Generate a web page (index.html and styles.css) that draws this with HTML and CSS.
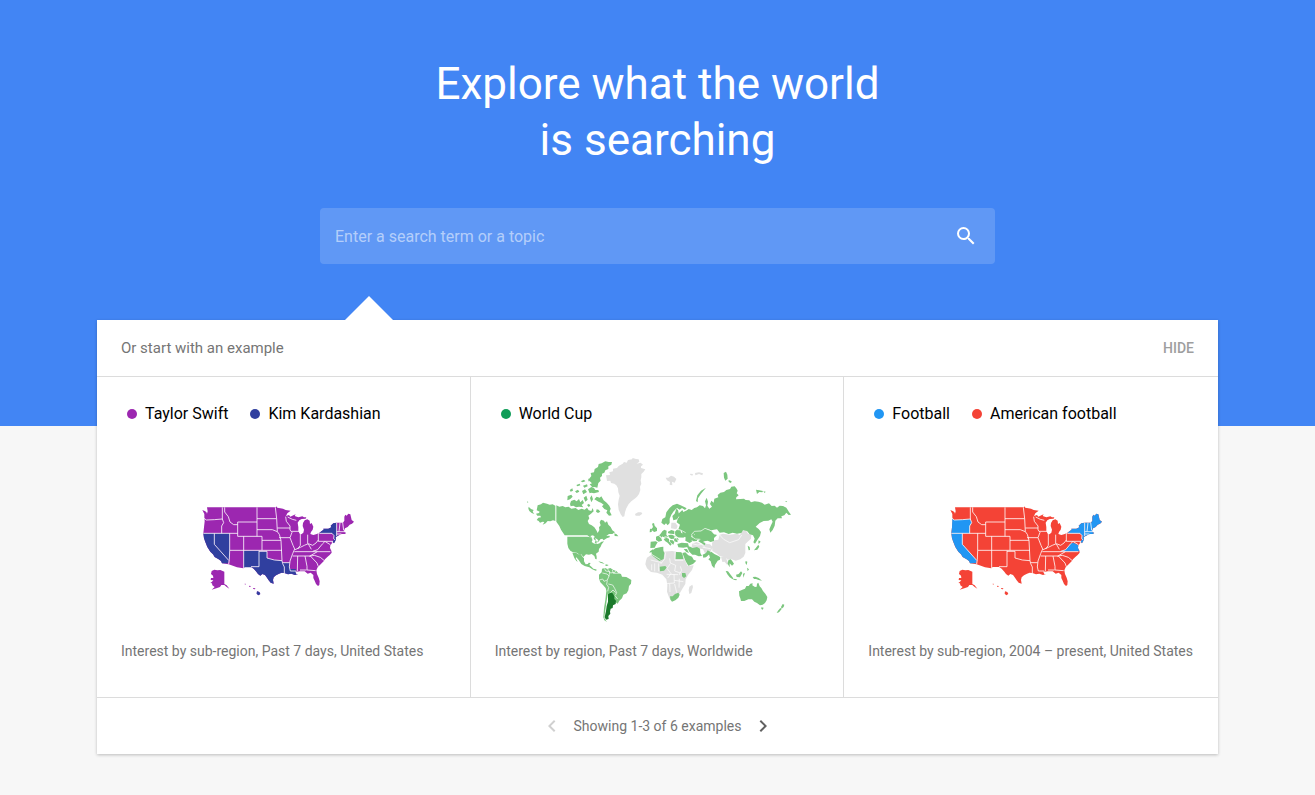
FILE: index.html
```html
<!DOCTYPE html>
<html lang="en">
<head>
  <meta charset="UTF-8" />
  <meta name="viewport" content="width=device-width, initial-scale=1" />
  <title>Explore what the world is searching</title>
  <link rel="stylesheet" href="styles.css">
</head>
<body>
  <!-- Shared map shapes -->
  <svg class="shapes" aria-hidden="true">
    <defs>
      <g id="us-land">
        <path d="M24 36L31 39 36 42 38 47 40 40 38 28H245L246 25 249 29 258 31 266 32 274 36 289 38 279 46 275 54 284 51 288 56 297 52 304 49 301 54 312 58 324 55 329 58 336 58 334 62 322 63 315 67 310 74 312 87 312 99 316 107 321 109 327 104 329 95 325 84 326 75 331 67 339 64 346 68 347 78 352 75 357 86 355 95 350 102 348 108 357 111 365 109 374 105 382 99 388 95 387 92 402 92 411 88 409 83 417 76 427 74H446L450 68 450 56 453 50 457 53 462 47 468 49 472 66 479 71 473 77 466 80 460 87 452 91 449 98 450 102 456 105 451 108 442 108 434 112 424 117 425 125 419 136 416 133 412 137 408 142 407 150 411 158 412 164 406 171 399 177 392 184 388 190 379 199 370 208 366 217 368 228 373 239 376 250 375 261 371 264 365 258 361 248 357 240 357 231 349 224 340 227 331 220 316 220 306 222 303 224 310 229 302 231 291 227 281 229 270 225 262 224 254 227 245 232 238 238 236 246 238 257 229 254 223 247 218 239 212 231 204 228 198 233 191 228 186 221 178 212 170 207H151L147 211 128 208 103 199 83 196 80 189 73 184 61 177 56 169 48 161 39 147 33 132 29 121 27 106 29 88 31 70 30 58 30 48z"/>
        <path d="M52 219L60 215 69 217 78 216 90 221V258L97 262 105 272 97 267 90 261 81 261 77 267 66 271 52 275 61 267 54 262 53 256 48 255 53 251 57 247 49 246 50 240 57 240 56 233 50 228z"/>
        <path d="M188 280L195 282 198 288 192 292 187 287zM176 270L183 271 182 274 177 273zM165 263L169 264 168 267 164 266zM151 257L154 257 154 260 151 259z"/>
      </g>
      <path id="us-lines" d="M29 61l7 5 24-1 24-2M84 28v35l4 11-6 10v22M91 28v14l11 14 5 16 11 8h12M27 106h103M130 72h58M130 72v43h73M188 28v87M188 62h59M188 95h46l15 6M60 106v33l43 48M106 106v52l-1 26-2 14M148 115v95M106 157h157M203 115v42M203 127h57M194 158v48h-24M194 160h24v20l22 6 23 2M243 28l4 34 2 39 6 8 5 18 3 61 2 9 5 10v18M249 90h38M254 119h33M274 56l2 14 11 14v12l6 7-6 16 9 23 5 11-6 14-8 22-2 18 3 12h17l2 10M280 57l14 7 12 3M291 100h23M318 108v34l-8 11M340 110v27M302 155l16-7 12-6 12-5 13 5 10-7 7-9M372 105v25h43M375 106h38l6 7-1 9 5 4M300 161h108M295 174h53l20 21 4 11M345 175l24-14M348 174l12-2 18 6 12 10M355 160l15-5 15-18 7-7M342 138l9 16M393 131l15 9M414 129v9M310 174l-1 46M332 174l6 31v11l26 2M317 216h20M265 194h21M427 74v40M437 74l-3 27M445 74l3 23M427 101h24M427 108h14"/>
      <path id="us-or" d="M30 62L36 66 60 65 84 63 88 74 82 84V106H27L29 88z"/>
      <path id="us-ca" d="M27 106H60V139L103 187 101 196 83 196 80 189 73 184 61 177 56 169 48 161 39 147 33 132 29 121z"/>
      <path id="us-nv" d="M60 106H106V158L105 184 103 187 60 139z"/>
      <path id="us-nm" d="M148 158H194V206H170L171 208H151L148 210z"/>
      <path id="us-tx" d="M194 160H218V180L240 186 263 188 265 197 270 207V225L262 224 254 227 245 232 238 238 236 246 238 257 229 254 223 247 218 239 212 231 204 228 198 233 191 228 186 221 178 212 170 206H194z"/>
      <path id="us-la" d="M265 194H286L285 201 288 213H304L306 222 303 224 310 229 302 231 291 227 281 229 270 225V207L265 197z"/>
      <path id="us-ny" d="M375 106L382 99 388 95 387 92 402 92 411 88 409 83 417 76 427 74V112L434 112 424 117 418 112 413 106z"/>
      <path id="us-nj" d="M419 113L424 117 425 125 419 136 415 131 419 124z"/>
      <path id="us-va" d="M355 160L370 155 385 137 393 134 408 142 407 150 411 158V160z"/>
      <path id="us-ne" d="M427 74H446L450 68 450 56 453 50 457 53 462 47 468 49 472 66 479 71 473 77 466 80 460 87 452 91 449 98 450 102 456 105 451 108 442 108 434 112 427 114z"/>
    </defs>
  </svg>

  <header class="hero">
    <h1>Explore what the world<br>is searching</h1>
    <form class="search" role="search">
      <input type="text" aria-label="Search term or topic" placeholder="Enter a search term or a topic" />
      <button type="submit" aria-label="Search">
        <svg width="24" height="24" viewBox="0 0 24 24"><path d="M15.500 14h-.790l-.280-.270A6.470 6.470 0 0 0 16 9.500 6.500 6.500 0 1 0 9.500 16c1.610 0 3.090-.590 4.230-1.570l.270.280v.790l5 4.990L20.490 19l-4.990-5zm-6 0C7.010 14 5 11.990 5 9.500S7.010 5 9.500 5 14 7.010 14 9.500 11.990 14 9.500 14z"/></svg>
      </button>
    </form>
  </header>

  <main class="examples">
    <div class="examples-header">
      <h2>Or start with an example</h2>
      <button type="button">HIDE</button>
    </div>

    <div class="cards">
      <a class="card" href="#taylor-swift">
        <ul class="legend">
          <li class="purple">Taylor Swift</li>
          <li class="indigo">Kim Kardashian</li>
        </ul>
        <div class="map">
          <svg width="176" height="122" viewBox="2 -54 528 366" aria-hidden="true">
            <use href="#us-land" class="fill-purple" />
            <g class="fill-indigo">
              <use href="#us-ca" /><use href="#us-nv" /><use href="#us-nm" /><use href="#us-tx" />
              <use href="#us-la" /><use href="#us-ny" /><use href="#us-nj" />
              <path d="M188 280L195 282 198 288 192 292 187 287z"/>
            </g>
            <use href="#us-lines" class="lines" />
          </svg>
        </div>
        <p>Interest by sub-region, Past 7 days, United States</p>
      </a>

      <a class="card" href="#world-cup">
        <ul class="legend">
          <li class="green">World Cup</li>
        </ul>
        <div class="map">
          <svg width="288" height="180" viewBox="-22 3 864 540" aria-hidden="true">
            <!-- Americas -->
            <g class="fill-green">
              <path d="M52 166l10-3 6-5 12 3 8 3 9-1 8 4v46l-7-2-8 3-8-1-6 7-9 4 5-8-5-1-8 3-4-5-6-3 5-7 8-1-2-5-9 0-4-6 9-2 2-4-9-4zM25 170l7 7 8 3-3 5 5 7-8-3-7-6-3-7zM20 154l4 2-2 3z"/>
              <path d="M108 166L117 170 127 168 135 172 145 170 153 176 166 174 174 180 184 176 193 179 200 173 205 181 213 183 217 174 220 184 212 191 204 197 207 205 202 213 206 222 214 226 222 232 228 241 232 249 237 240 236 232 241 226 238 217 242 209 251 212 254 218 260 214 264 224 271 231 276 241 284 247 276 252 266 252 258 258 268 257 268 262 259 265 250 271 246 266 240 268 234 276 223 280 226 271 218 267 208 261 201 256H133L128 248 122 239 117 228 108 215z"/>
              <path d="M141 260H201L210 262 218 268 214 276 222 281 233 280 241 276 251 274 244 283 241 290 236 297 235 305 227 311 229 320 229 328 225 327 222 318 214 312 206 314 197 313 189 321 182 312 176 313 169 308 158 307 150 302 144 294 141 281z"/>
              <path d="M156 308l12 1 6 4 7-1 6 9 4 4 0 9 5 9 7-1 2-4 6 1-4 6 7 6 5 5 7 2 4 2-4 2-10-4-9-6-14-4-10-6-8-12-7-8-2 2 6 11-4-2-6-9z"/>
              <path d="M203 96l3-9 7-9-2-9 10-2 2-10 10-6 2-9 9-2 11-6 10 2 10 0-2 8-9 5 0 8-9 4-3 7-7 3 0 7-6 5 2 9-7 7-3 14-9-2-6 1-8-9 7-3-5-5-4-3-3-8z"/>
              <path d="M142 138l11-4 4 6-8 8-8 3zM152 153l10-4 7 5 7-7 4 10 7-7 4 9-7 6 5 7-13-2-9 2-8-5-8 2-2-7zM181 94l10-5 4 5-8 3zM168 105l10-4 2 5-9 3zM188 107l12-4 2 6-10 4zM148 120l8-5 2 7-7 3zM164 124l9-5 4 6-8 4zM203 118l10-7 8 3 4 6 9 0 2 6-15 4-8-2-5 2zM185 123l9-5 6 8-11 7zM190 143l8-6 4 12-7 6zM209 144l5-8 4 12-5 9zM222 148l7-8 9 3 5-4 7 12 9 7 8 9 4 9-3 8 6 12-8 1-8-9 3-7-9-4-7-8 5-5-8-6-6-2zM229 178l6 1 5 6-7 4-6-4zM200 165l6-4 4 6-5 4zM282 250l7 3 5 6-11-1zM234 334l12 3 7 5-13-4zM256 343l9 2-5 3-5-1z"/>
              <path d="M236 374l8-7 1-11 9-2 7 3 9-3 9 6 8 2 8 8 7 2 3 8 13 1 9 5 6 4-1 11-6 7-2 13-5 9-10 4-4 11-8 7-5 9-8-6-7-9-7-11-6-2-6-10-2-9-8-9-8-8-4-10z"/>
              <path d="M258 423l5 5-4 24-3 21-3 20-1 12 8 11-8-5-3-9 2-27 4-25z"/>
            </g>
            <path class="fill-white" d="M210 258l8-2 6 5-4 2 1 8-4 1-2-8zM224 264l7 4 4 6-6 1zM228 279l10-3 4 2-11 4z"/>
            <path class="fill-dark" d="M263 433l8-5 6 2 5 9 0 8 5 5-1 10-8 4-1 8-6 2-2 9 1 6-6 7 1 9-8 2-4-7 2-10 2-9 2-15 4-13z"/>
            <path class="land-lines" d="M237 390l10-3 4 7 10-4 5-12-6-6-14-3M252 355l4 8 12 2-2 14M262 357l8 12 14-2 4-9M276 360l3 10 10 0 8-1M262 424l3-12-6-9 2-12M264 402l13 3 6 10 6 13-4 8M270 428l8-8 8 8M284 437l8 10"/>
            <path class="fill-grey" d="M257 76l12-1-2-8 11-3 0-8 12-2 5-6 12-7 4-5 8 2 4-8 12-2 2-4 10 3 8 1 2 7-8 6 12-3 7 6-6 5 0 5 13 4-5 7-7 7 0 10-2 9 2 10-4 9 1 10-4 12-6 8-9 8-8 6-8 8-7 13-4 12-2 12-5 2-6-8-6-14-2-16 2-14 3-12-4-10-1-12-5-9-6-5-10-2-2-7-10 1-1-7zM344 192l9-5 10 0 3 4-8 6-12 0z"/>

            <!-- Europe, Africa, Asia, Oceania -->
            <g transform="translate(360 0)">
              <path class="fill-grey" d="M76 83l8 0 8-6 9 3 7 7-5 11-8-3 1 11-8-2 1-8-9-5zM150 71l8 1-2 5-7-3zM164 69l12-2 12 3-2 6-10-4-11 4z"/>
              <path class="fill-grey" d="M17 332L20 323 31 316 44 315 70 305 95 303 124 308 133 330 142 348 160 346 155 360 143 375 136 388 135 402 127 415 117 432 104 448 92 453 86 442 80 425 81 405 78 388 66 374 50 368 32 366 20 355 15 343zM147 410L156 404 158 411 153 429 147 432 145 421z"/>
              <path class="fill-grey" d="M215 279l7-8 12-2 4-15 10-3 20 3 22-3 9 4 5-11 13-3 6 10 10 3-1 12-10 9-7 7 0 13 0 14-5 11-10 8-14 4-12-4-12 1-10-10-13 0-9-8-14-8zM155 281l14-5 12 6 14-1 14 2 8 8-6 14-16 7-7-14-15-3-11 3-8-7zM242 320l12-2 6 13 5 12-5 1-7-9-7 1zM93 218l12 0 7 10-4 10-16-3z"/>
              <path class="fill-green" d="M112 207L117 200 112 193 119 187 126 180 129 186 140 181 145 177 154 180 162 174 170 172 178 166 188 168 194 175 197 166 194 154 199 143 203 155 201 167 207 176 215 170 209 162 213 152 220 158 222 146 234 142 232 135 240 128 251 126 258 120 269 117 273 110 283 109 289 116 292 122 289 130 295 136 288 142 287 148 300 147 311 146 316 150 327 151 332 157 343 154 354 155 365 158 373 164 386 160 394 168 403 167 410 173 418 167 428 168 438 173 446 186 452 194 445 195 438 188 432 196 423 199 425 205 412 205 405 212 403 227 397 240 390 248 387 238 392 226 397 215 393 208 384 212 370 213 358 219 346 230 355 237 362 246 359 258 351 270 344 281 339 277 343 266 338 256 328 253 320 243 308 241 303 249 290 251 277 248 265 252 251 247 238 248 230 238 212 241 197 236 186 242 168 243 160 250 163 262 169 266 170 273 160 274 148 268 138 264 128 254 124 242 114 238 119 224 109 217z"/>
              <path class="fill-green" d="M155 262l8-8-5-7 8-6 16 1 11-7 20 7 8 10 9 3-9 9 0 9-10 3-9-4-10 2-9 5-9-11-6 4zM63 218l3-11 9-5 3-15 9-12 10-9 13-5 9 4 13 6 7 4-5 5-9-6-7 5-8-5-10 10-7 10-5 12 0 13-6 7-5-6-5 5zM99 211l-3-13 7-7 5-15 5 4 4 17-7 11zM88 189l4 0-4 16-3 10-2 0z"/>
              <path class="fill-green" d="M37 243l-4-5 5-7-3-10 6-2 2 8 7 8 0 8-8 3zM29 236l6 1-1 9-6 1zM47 260l10-4 5-6 6 4-4 9 1 9-10 3-8-5zM31 275l15-1 6 3-5 8-4 8-13 1zM61 251l5-7 6-5 7 3-1 12 5 7-9 2-7-3zM83 245l10-5 9 3 0 9-12 1-7-3zM70 267l9-4 7 4 0 7 8 9-4 4-8-9-8-5zM104 245l7-7 9 3 3 8 12 3 3 6-9 5-13 0-11-4zM84 255l11-1 8 4-2 8-9 1-7-6zM101 266l9-3 5 5-4 9-9-3zM88 270l9 1 5 5-3 8-9-7zM111 282l13-4 19 2 3 10-17 3-15-1zM136 261l11 1 9 12-8 5-13-7z"/>
              <path class="fill-green" d="M34 303l11-8 17-4 7-1 0 11 3 9-2 17-13 6-12-9-11-9zM29 304l10-7-4 9-8 2zM107 306l16 1 4 8 2 12-24 0zM126 309l9-2 9 9 11 4 5 9 8 3-10 10-14 5-8-13zM139 288l11 2 7 4 13-3 9 5 1 13 5 9-10 1-11-5-8 0-9-9zM130 297l10 0 6 12-8-3zM187 314l10-5 5-8 8 4-3 8-10 9-8 1zM205 310l8-5 9 7 11 5 7 5-1 7-7 3-8 13-2 10-7-8-4-13-7-6 5-5zM58 350l17-2 4 5-8 9-12 2zM125 369l10 0 3 10-7 5-6-5zM172 272l9 1 14 6-1 7-12-7z"/>
              <path class="fill-green" d="M89 439l8 0 7-7 10-4 4 6-4 9-9 8-10 4-5-7zM264 331l7-3 4 4 6 9-6 6-7-7 0 12-6-11zM256 363l7 1 8 10 8 11-2 3-9-6-7-9zM279 386l11 2-2 3-9-2zM287 374l8-2 7-8 4 5-7 13-10-1zM308 371l6-2-2 6-3 8zM337 381l8-1 10 4 10 8-10-2-8-3-6 0zM316 333l5 2-2 10-4-6zM320 353l6 5-4 6z"/>
              <path class="fill-green" d="M296 424l10-5 8-3 4-8 7 0 5-7 7-1-1 6 8 5 5-1 1-9 4-3 4 11 5 5 5 9 7 8 6 10-2 10-5 8-7 5-8 2-9-7-8-4-7-7-11 0-12 5-10 0-2-8-3-8zM363 472l7 1-3 6-4-2zM427 462l5 2-2 7-6 5-2-5zM420 474l4 3-8 10-7 2 4-7zM355 271l6 4-6 7-1-5zM354 284l3 6-6 9-10 2 6-8zM322 287l6 4 1 9-4 1z"/>
              <path class="fill-green" d="M197 113l-15 9-11 14-4 17 5 4 1-12 9-14zM250 69l7-4 4 9 1 12-7 6-4-9zM265 90l9 4-2 5-7-3zM347 119l10 2 11 2-2 4-9-1-7 6zM369 124l7 1-3 4zM435 153l6 1-4 3z"/>
              <path class="land-lines" d="M156 263l-2-10 8-9 20-1 12-8 18 7 12 12M104 238l17 2 15 8M83 251l19 3 12 10 20 1M47 250l18 14 14-5M58 258l10 14M106 262l10 16M152 258l13 9 15 1M180 279l15 14M187 292l24 4M34 313l26 16M31 330l33 8M76 307l-3 20-12 15M88 325l2 14 16 7M104 306v25h25M90 341l-10 14 12 16-10 13M106 346l-3 17 17 6M120 349l4 12-8 14M79 373l34 1M101 372l1 27-24 2M102 391l27 4M88 401l1 25M103 402l6 26M117 386l-1 27M43 340v24M34 343v18M55 340v24M238 255l12 13 18 10 27-9 9-14M156 281l15 4 16-2"/>
            </g>
          </svg>
        </div>
        <p>Interest by region, Past 7 days, Worldwide</p>
      </a>

      <a class="card" href="#football">
        <ul class="legend">
          <li class="blue">Football</li>
          <li class="red">American football</li>
        </ul>
        <div class="map">
          <svg width="176" height="122" viewBox="2 -54 528 366" aria-hidden="true">
            <use href="#us-land" class="fill-red" />
            <g class="fill-blue">
              <use href="#us-or" /><use href="#us-ca" /><use href="#us-ny" /><use href="#us-nj" />
              <use href="#us-va" /><use href="#us-ne" />
            </g>
            <use href="#us-lines" class="lines" />
          </svg>
        </div>
        <p>Interest by sub-region, 2004 – present, United States</p>
      </a>
    </div>

    <div class="pager">
      <button type="button" aria-label="Previous examples" disabled>
        <svg width="24" height="24" viewBox="0 0 24 24"><path d="M15.410 7.410L14 6l-6 6 6 6 1.410-1.410L10.830 12z"/></svg>
      </button>
      <span>Showing 1-3 of 6 examples</span>
      <button type="button" aria-label="Next examples">
        <svg width="24" height="24" viewBox="0 0 24 24"><path d="M10 6L8.590 7.410 13.170 12l-4.580 4.590L10 18l6-6z"/></svg>
      </button>
    </div>
  </main>
</body>
</html>
```
FILE: styles.css
```css
* {
  box-sizing: border-box;
}
body {
  margin: 0;
  font-family: Roboto, Arial, sans-serif;
  font-size: 14px;
  background: #f7f7f7;
  color: #757575;
}
.shapes {
  position: absolute;
  width: 0;
  height: 0;
}
button {
  padding: 0;
  border: none;
  background: none;
  font-family: inherit;
  cursor: pointer;
}
button svg {
  display: block;
  fill: currentColor;
}

/* Hero */
.hero {
  padding: 56px 24px 162px;
  background: #4285f4;
}
.hero h1 {
  margin: 0 0 40px;
  font-size: 44px;
  font-weight: 400;
  line-height: 56px;
  text-align: center;
  color: white;
}
.search {
  display: flex;
  align-items: center;
  max-width: 675px;
  height: 56px;
  margin: 0 auto;
  padding: 0 17px 0 15px;
  border-radius: 4px;
  background: rgba(255, 255, 255, 0.16);
}
.search input {
  flex: 1;
  min-width: 0;
  padding: 0;
  border: none;
  outline: none;
  background: none;
  font-family: inherit;
  font-size: 16px;
  color: white;
}
.search input::placeholder {
  color: rgba(255, 255, 255, 0.54);
}
.search button {
  color: white;
}

/* Examples */
.examples {
  position: relative;
  max-width: 1121px;
  margin: -106px auto 40px;
  background: white;
  box-shadow: 0 1px 3px rgba(0, 0, 0, 0.24);
}
.examples::before {
  content: "";
  position: absolute;
  top: -24px;
  left: 248px;
  border: 24px solid transparent;
  border-top: none;
  border-bottom-color: white;
}
.examples-header {
  display: flex;
  justify-content: space-between;
  align-items: center;
  height: 57px;
  padding: 0 24px;
  border-bottom: 1px solid #dcdcdc;
}
.examples-header h2 {
  margin: 0;
  font-size: 15px;
  font-weight: 400;
}
.examples-header button {
  font-size: 14px;
  font-weight: 500;
  color: #9e9e9e;
}
.cards {
  display: grid;
  grid-template-columns: repeat(3, 1fr);
}
.card {
  padding: 24px 24px 36px;
  border-right: 1px solid #dcdcdc;
  text-decoration: none;
  color: inherit;
}
.card:last-child {
  border-right: none;
}
.card p {
  margin: 0;
  line-height: 20px;
  white-space: nowrap;
}
.legend {
  display: flex;
  gap: 22px;
  margin: 0 0 14px;
  padding: 0 6px;
  list-style: none;
  font-size: 16px;
  line-height: 26px;
  color: black;
}
.legend li {
  display: flex;
  align-items: center;
  gap: 8px;
}
.legend li::before {
  content: "";
  width: 10px;
  height: 10px;
  border-radius: 50%;
}
.purple::before { background: #9c27b0; }
.indigo::before { background: #303f9f; }
.green::before { background: #0f9d58; }
.blue::before { background: #2196f3; }
.red::before { background: #f44336; }

/* Maps */
.map {
  display: flex;
  justify-content: center;
  align-items: center;
  height: 200px;
}
.fill-purple { fill: #9c27b0; }
.fill-indigo { fill: #303f9f; }
.fill-green { fill: #7bc67e; }
.fill-dark { fill: #1b7a2b; }
.fill-grey { fill: #e0e0e0; }
.fill-white { fill: white; }
.fill-blue { fill: #2196f3; }
.fill-red { fill: #f44336; }
.lines {
  fill: none;
  stroke: rgba(255, 255, 255, 0.8);
  stroke-width: 3;
}
.land-lines {
  fill: none;
  stroke: white;
  stroke-width: 2;
}

/* Pager */
.pager {
  display: flex;
  justify-content: center;
  align-items: center;
  gap: 10px;
  height: 57px;
  border-top: 1px solid #dcdcdc;
}
.pager button {
  color: #616161;
}
.pager button:disabled {
  color: #d0d0d0;
}
```
